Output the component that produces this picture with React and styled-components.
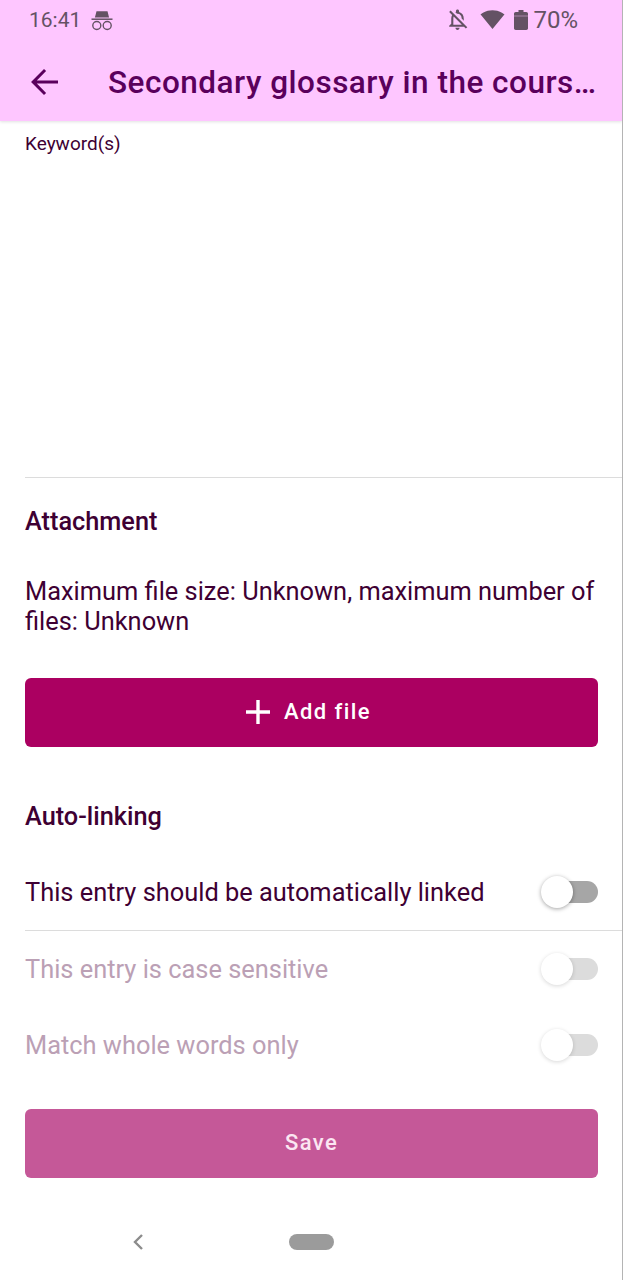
import React from 'react'
import styled, { createGlobalStyle } from 'styled-components'

const GlobalStyle = createGlobalStyle`
  html, body {
    margin: 0;
    padding: 0;
    background: #fff;
  }
  * {
    box-sizing: border-box;
  }
`

const Page = styled.div`
  width: 623px;
  height: 1280px;
  display: flex;
  flex-direction: column;
  overflow: hidden;
  background: #fff;
  border-right: 1px solid #b4b4b4;
  font-family: Roboto, "Liberation Sans", sans-serif;
  color: #3e0033;
`

const Header = styled.header`
  height: 121px;
  flex: none;
  background: #fec6ff;
  box-shadow: 0 1px 3px rgba(0, 0, 0, 0.12);
  position: relative;
`

const StatusBar = styled.div`
  height: 39px;
  padding: 0 44px 0 29px;
  display: flex;
  align-items: center;
  color: #645264;
  font-size: 21px;
`

const Clock = styled.span`
  margin-right: 9px;
`

const StatusRight = styled.div`
  margin-left: auto;
  display: flex;
  align-items: center;
  font-size: 24px;
`

const Percent = styled.span`
  margin-left: 5px;
`

const AppBar = styled.div`
  height: 82px;
  padding: 4px 16px 0 23px;
  display: flex;
  align-items: center;
  color: #5a005c;
`

const Title = styled.h1`
  margin: 0 0 0 43px;
  min-width: 0;
  flex: 1;
  font-size: 31.5px;
  font-weight: 500;
  letter-spacing: 0.5px;
  white-space: nowrap;
`

const Content = styled.main`
  flex: 1;
  display: flex;
  flex-direction: column;
`

const KeywordField = styled.div`
  height: 357px;
  margin-left: 25px;
  padding-top: 12px;
  border-bottom: 1px solid #dcdcdc;
  font-size: 19px;
  line-height: 22px;
`

const Section = styled.section`
  padding: ${p => p.$top || 0}px 24px ${p => p.$bottom || 0}px 25px;
`

const Heading = styled.h2`
  margin: 0;
  font-size: 25.3px;
  line-height: 30px;
  font-weight: 500;
`

const Notice = styled.p`
  margin: 39px 0 42px;
  font-size: 25.4px;
  line-height: 30px;
`

const Button = styled.button`
  width: 100%;
  height: 69px;
  border: 0;
  border-radius: 6px;
  padding: 0 ${p => (p.$dimmed ? 0 : 7)}px 2px 0;
  display: flex;
  align-items: center;
  justify-content: center;
  gap: 13px;
  background: ${p => (p.$dimmed ? '#c55898' : '#ab0061')};
  color: ${p => (p.$dimmed ? '#fbe6f2' : '#fff')};
  font-family: inherit;
  font-size: 22px;
  font-weight: 500;
  letter-spacing: 1.4px;
`

const Row = styled.div`
  height: ${p => p.$height}px;
  margin-left: 25px;
  padding-right: 24px;
  display: flex;
  align-items: center;
  justify-content: space-between;
  font-size: 25.4px;
  color: ${p => (p.$disabled ? '#bba0b5' : '#3e0033')};
  border-bottom: ${p => (p.$divider ? '1px solid #dcdcdc' : '0')};
`

const Track = styled.div`
  position: relative;
  width: 50px;
  height: 22px;
  border-radius: 11px;
  background: ${p => (p.$disabled ? '#dcdcdc' : '#a6a6a6')};
`

const Thumb = styled.div`
  position: absolute;
  left: -7px;
  top: -5px;
  width: 32px;
  height: 32px;
  border-radius: 50%;
  background: #fff;
  box-shadow: ${p => (p.$disabled
    ? '0 1px 4px rgba(0, 0, 0, 0.16)'
    : '0 1px 4px rgba(0, 0, 0, 0.36)')};
`

const NavBar = styled.nav`
  flex: 1;
  display: flex;
  align-items: center;
  padding: 26px 0 0 131px;
`

const NavPill = styled.div`
  width: 45px;
  height: 16px;
  margin-left: 144px;
  border-radius: 8px;
  background: #9b9b9b;
`

const Incognito = () => (
  <svg width="24" height="24" viewBox="0 0 24 24" fill="none">
    <path d="M6.5 3.2h11l1.6 6.2H4.9z" fill="#645264" />
    <path d="M1.5 11.2h21" stroke="#645264" strokeWidth="1.5" />
    <circle cx="6.8" cy="17.5" r="4" stroke="#645264" strokeWidth="1.4" />
    <circle cx="17.2" cy="17.5" r="4" stroke="#645264" strokeWidth="1.4" />
  </svg>
)

const BellOff = () => (
  <svg width="25" height="25" viewBox="0 0 24 24" fill="#645264">
    <path d="M12 22c1.1 0 2-.9 2-2h-4c0 1.1.9 2 2 2zm0-15.5c2.49 0 4 2.02 4 4.5v.1l2 2V11c0-3.07-1.63-5.64-4.5-6.32V4c0-.83-.67-1.5-1.5-1.5s-1.5.67-1.5 1.5v.68c-.24.06-.47.15-.69.23l1.64 1.64c.18-.02.36-.05.55-.05zM5.41 3.35L4 4.76l2.81 2.81C6.29 8.57 6 9.74 6 11v5l-2 2v1h14.24l1.74 1.74 1.41-1.41L5.41 3.35zM16 17H8v-6c0-.68.12-1.32.34-1.9L16 16.76V17z" />
  </svg>
)

const Wifi = () => (
  <svg width="25" height="25" viewBox="0 0 24 24" fill="#645264" style={{ marginLeft: 10 }}>
    <path d="M12 21L23.6 7C23.1 6.7 18.7 3 12 3S.9 6.7.4 7L12 21z" />
  </svg>
)

const Battery = () => (
  <svg width="14" height="20" viewBox="0 0 14 20" fill="#645264" style={{ marginLeft: 9 }}>
    <path d="M4.5 0h5v2h2.8c.9 0 1.7.8 1.7 1.7v14.6c0 .9-.8 1.7-1.7 1.7H1.7C.8 20 0 19.2 0 18.3V3.7C0 2.8.8 2 1.7 2h2.8z" />
    <path d="M0 6h14" stroke="#fec6ff" strokeOpacity="0.45" strokeWidth="1" />
  </svg>
)

const BackArrow = () => (
  <svg width="42" height="42" viewBox="0 0 24 24" fill="currentColor">
    <path d="M20 11.1H7.9l5.3-5.4L12 4.6 4.6 12l7.4 7.4 1.2-1.1-5.3-5.4H20z" />
  </svg>
)

const Plus = () => (
  <svg width="26" height="26" viewBox="0 0 26 26" fill="#fff">
    <path d="M11.3 1h3.4v10.3H25v3.4H14.7V25h-3.4V14.7H1v-3.4h10.3z" />
  </svg>
)

const Chevron = () => (
  <svg width="14" height="18" viewBox="0 0 14 18" fill="none">
    <path d="M11 2L4 9l7 7" stroke="#8c8c8c" strokeWidth="2.4" />
  </svg>
)

const Toggle = ({ disabled }) => (
  <Track $disabled={disabled}>
    <Thumb $disabled={disabled} />
  </Track>
)

export default function App() {
  return (
    <Page>
      <GlobalStyle />
      <Header>
        <StatusBar>
          <Clock>16:41</Clock>
          <Incognito />
          <StatusRight>
            <BellOff />
            <Wifi />
            <Battery />
            <Percent>70%</Percent>
          </StatusRight>
        </StatusBar>
        <AppBar>
          <BackArrow />
          <Title>Secondary glossary in the cours…</Title>
        </AppBar>
      </Header>
      <Content>
        <KeywordField>Keyword(s)</KeywordField>
        <Section $top={29}>
          <Heading>Attachment</Heading>
          <Notice>Maximum file size: Unknown, maximum number of files: Unknown</Notice>
          <Button>
            <Plus />
            Add file
          </Button>
        </Section>
        <Section $top={55} $bottom={22}>
          <Heading>Auto-linking</Heading>
        </Section>
        <Row $height={77} $divider>
          This entry should be automatically linked
          <Toggle />
        </Row>
        <Row $height={75} $disabled>
          This entry is case sensitive
          <Toggle disabled />
        </Row>
        <Row $height={77} $disabled>
          Match whole words only
          <Toggle disabled />
        </Row>
        <Section $top={26}>
          <Button $dimmed>Save</Button>
        </Section>
        <NavBar>
          <Chevron />
          <NavPill />
        </NavBar>
      </Content>
    </Page>
  )
}
